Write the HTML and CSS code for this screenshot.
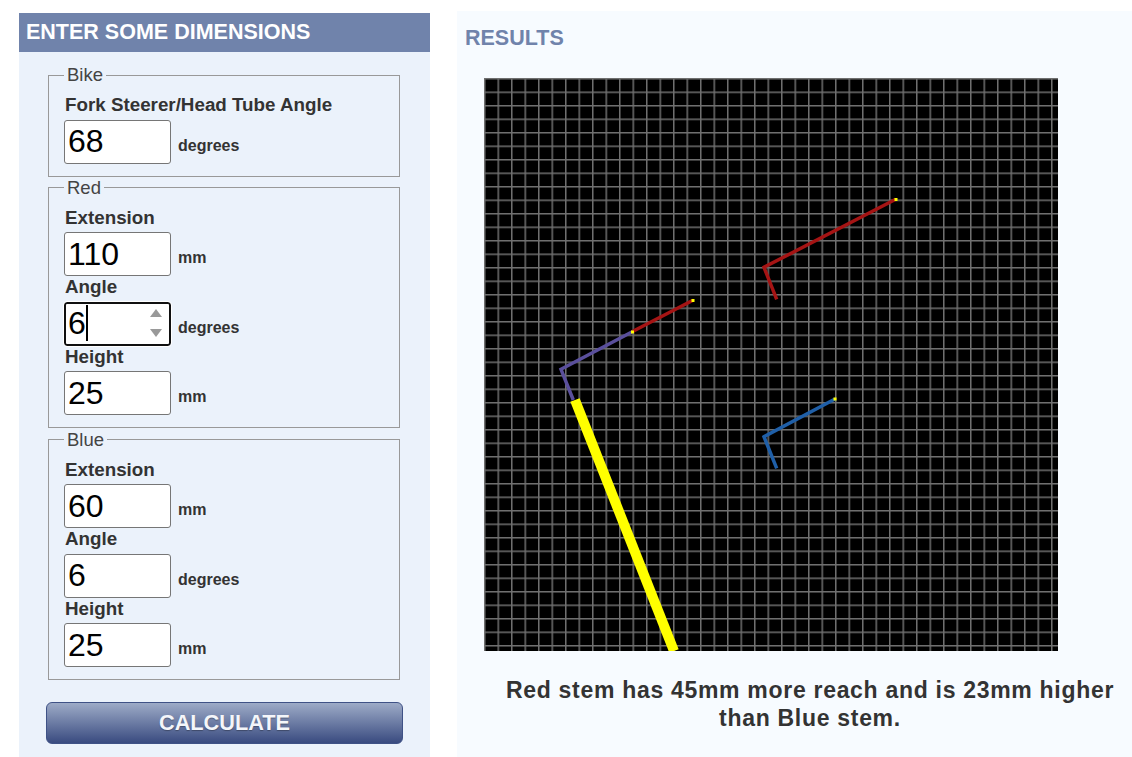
FILE: index.html
```html
<!DOCTYPE html>
<html lang="en">

<head>
    <meta charset="UTF-8">
    <meta name="viewport" content="width=device-width, initial-scale=1.0">
    <title>Stem Comparison</title>
    <link rel="stylesheet" href="styles.css">
</head>

<body>
    <div class="page">
        <form class="inputs">
            <h2>ENTER SOME DIMENSIONS</h2>

            <fieldset>
                <legend>Bike</legend>
                <label for="head-angle">Fork Steerer/Head Tube Angle</label>
                <div class="row">
                    <input type="number" id="head-angle" value="68">
                    <span class="unit">degrees</span>
                </div>
            </fieldset>

            <fieldset>
                <legend>Red</legend>
                <label for="red-ext">Extension</label>
                <div class="row">
                    <input type="number" id="red-ext" value="110">
                    <span class="unit">mm</span>
                </div>
                <label for="red-angle">Angle</label>
                <div class="row">
                    <div class="active-field">
                        <input type="number" id="red-angle" class="active" value="6">
                        <span class="caret"></span>
                        <svg class="spinner" width="12" height="28" viewBox="0 0 12 28">
                            <path d="M0 8 L6 0 L12 8 Z" fill="#999"/>
                            <path d="M0 20 L12 20 L6 28 Z" fill="#999"/>
                        </svg>
                    </div>
                    <span class="unit">degrees</span>
                </div>
                <label for="red-height">Height</label>
                <div class="row">
                    <input type="number" id="red-height" value="25">
                    <span class="unit">mm</span>
                </div>
            </fieldset>

            <fieldset>
                <legend>Blue</legend>
                <label for="blue-ext">Extension</label>
                <div class="row">
                    <input type="number" id="blue-ext" value="60">
                    <span class="unit">mm</span>
                </div>
                <label for="blue-angle">Angle</label>
                <div class="row">
                    <input type="number" id="blue-angle" value="6">
                    <span class="unit">degrees</span>
                </div>
                <label for="blue-height">Height</label>
                <div class="row">
                    <input type="number" id="blue-height" value="25">
                    <span class="unit">mm</span>
                </div>
            </fieldset>

            <button type="button" class="calc">CALCULATE</button>
        </form>

        <div class="results">
            <h3>RESULTS</h3>
            <svg class="plot" width="574" height="573" viewBox="0 0 574 573">
                <defs>
                    <pattern id="grid" width="13.5" height="13.5" patternUnits="userSpaceOnUse">
                        <rect width="13.5" height="1.5" fill="#707070"/>
                        <rect width="1.5" height="13.5" fill="#707070"/>
                    </pattern>
                </defs>
                <rect width="574" height="573" fill="#000"/>
                <rect width="574" height="573" fill="url(#grid)"/>

                <g transform="translate(1 0)">
                    <!-- both stems on the bike -->
                    <line x1="90" y1="322" x2="189" y2="573" stroke="#ff0" stroke-width="10"/>
                    <polyline points="147,253.8 208,222.3" fill="none" stroke="#a51414" stroke-width="3.5"/>
                    <polyline points="88.3,322 76,291.3 147.3,253.7" fill="none" stroke="#5a4f9c" stroke-width="3.5"/>
                    <rect x="146" y="252.5" width="3" height="3" fill="#ff0"/>
                    <rect x="206.5" y="221" width="3" height="3" fill="#ff0"/>

                    <!-- red stem -->
                    <polyline points="291.7,221.3 279,189.3 410.7,121.3" fill="none" stroke="#a51414" stroke-width="3.5"/>
                    <rect x="409.5" y="120" width="3" height="3" fill="#ff0"/>

                    <!-- blue stem -->
                    <polyline points="291.7,390.3 279,358.7 350,321" fill="none" stroke="#1f5fa8" stroke-width="3.5"/>
                    <rect x="348.5" y="319.5" width="3" height="3" fill="#ff0"/>
                </g>
            </svg>
            <p class="message">Red stem has 45mm more reach and is 23mm higher than Blue stem.</p>
        </div>
    </div>
</body>

</html>
```

FILE: styles.css
```css
body {
    font-family: "Liberation Sans", Arial, sans-serif;
    background-color: #fff;
    color: #333;
    margin: 0;
    padding: 0;
}

.page {
    display: flex;
    align-items: flex-start;
    height: 757px;
    overflow: hidden;
}

.inputs {
    width: 411px;
    height: 744px;
    margin: 13px 0 0 19px;
    background-color: #ebf2fb;
    flex-shrink: 0;
    box-sizing: border-box;
}

.inputs h2 {
    margin: 0 0 13px;
    height: 39px;
    line-height: 39px;
    padding-left: 7px;
    font-size: 21.5px;
    font-weight: bold;
    color: #fff;
    background-color: #7083ab;
}

fieldset {
    width: 352px;
    box-sizing: border-box;
    margin: 0 0 1.1px 29px;
    padding: 9px 0 12px 15px;
    border: 1px solid #999;
    min-inline-size: 0;
}

legend {
    font-size: 18.5px;
    line-height: 20px;
    color: #444;
    padding: 0 3px;
}

label {
    display: block;
    height: 25.6px;
    line-height: 21.6px;
    padding-left: 1px;
    font-size: 18.8px;
    font-weight: bold;
}

.row {
    display: flex;
    align-items: center;
    gap: 7px;
}

.row input {
    width: 107px;
    height: 44px;
    box-sizing: border-box;
    padding: 0 3px;
    border: 1px solid #767676;
    border-radius: 3px;
    background-color: #fff;
    font-family: "Liberation Sans", Arial, sans-serif;
    font-size: 32px;
    color: #000;
    appearance: textfield;
}

.row input.active {
    border: 2px solid #101010;
    padding: 0 2px;
    outline: 1px solid #fff;
}

.unit {
    font-size: 16px;
    font-weight: bold;
    padding-top: 8px;
}

.active-field {
    position: relative;
    height: 44px;
}

.caret {
    position: absolute;
    left: 22px;
    top: 3px;
    width: 1.5px;
    height: 36px;
    background-color: #000;
}

.spinner {
    position: absolute;
    right: 9px;
    top: 7px;
}

.calc {
    display: block;
    width: 357px;
    height: 42px;
    margin: 21.6px 0 0 27px;
    border: 1px solid #3f5286;
    border-radius: 6px;
    background: linear-gradient(#9dabc7, #394b80);
    color: #f4f6fa;
    font-family: "Liberation Sans", Arial, sans-serif;
    font-size: 21.7px;
    font-weight: bold;
    text-shadow: 0 1px 1px rgba(0, 0, 0, 0.3);
    cursor: pointer;
}

.results {
    flex: 1;
    height: 746px;
    margin: 11px 0 0 27px;
    padding-left: 8px;
    background-color: #f7fbff;
}

.results h3 {
    margin: 0;
    height: 67px;
    line-height: 54px;
    font-size: 21.5px;
    font-weight: bold;
    color: #7083ab;
}

.plot {
    display: block;
    margin-left: 19px;
}

.message {
    margin: 25px 0 0 20px;
    width: 650px;
    font-size: 23px;
    letter-spacing: 0.7px;
    font-weight: bold;
    line-height: 28px;
    text-align: center;
}
```
